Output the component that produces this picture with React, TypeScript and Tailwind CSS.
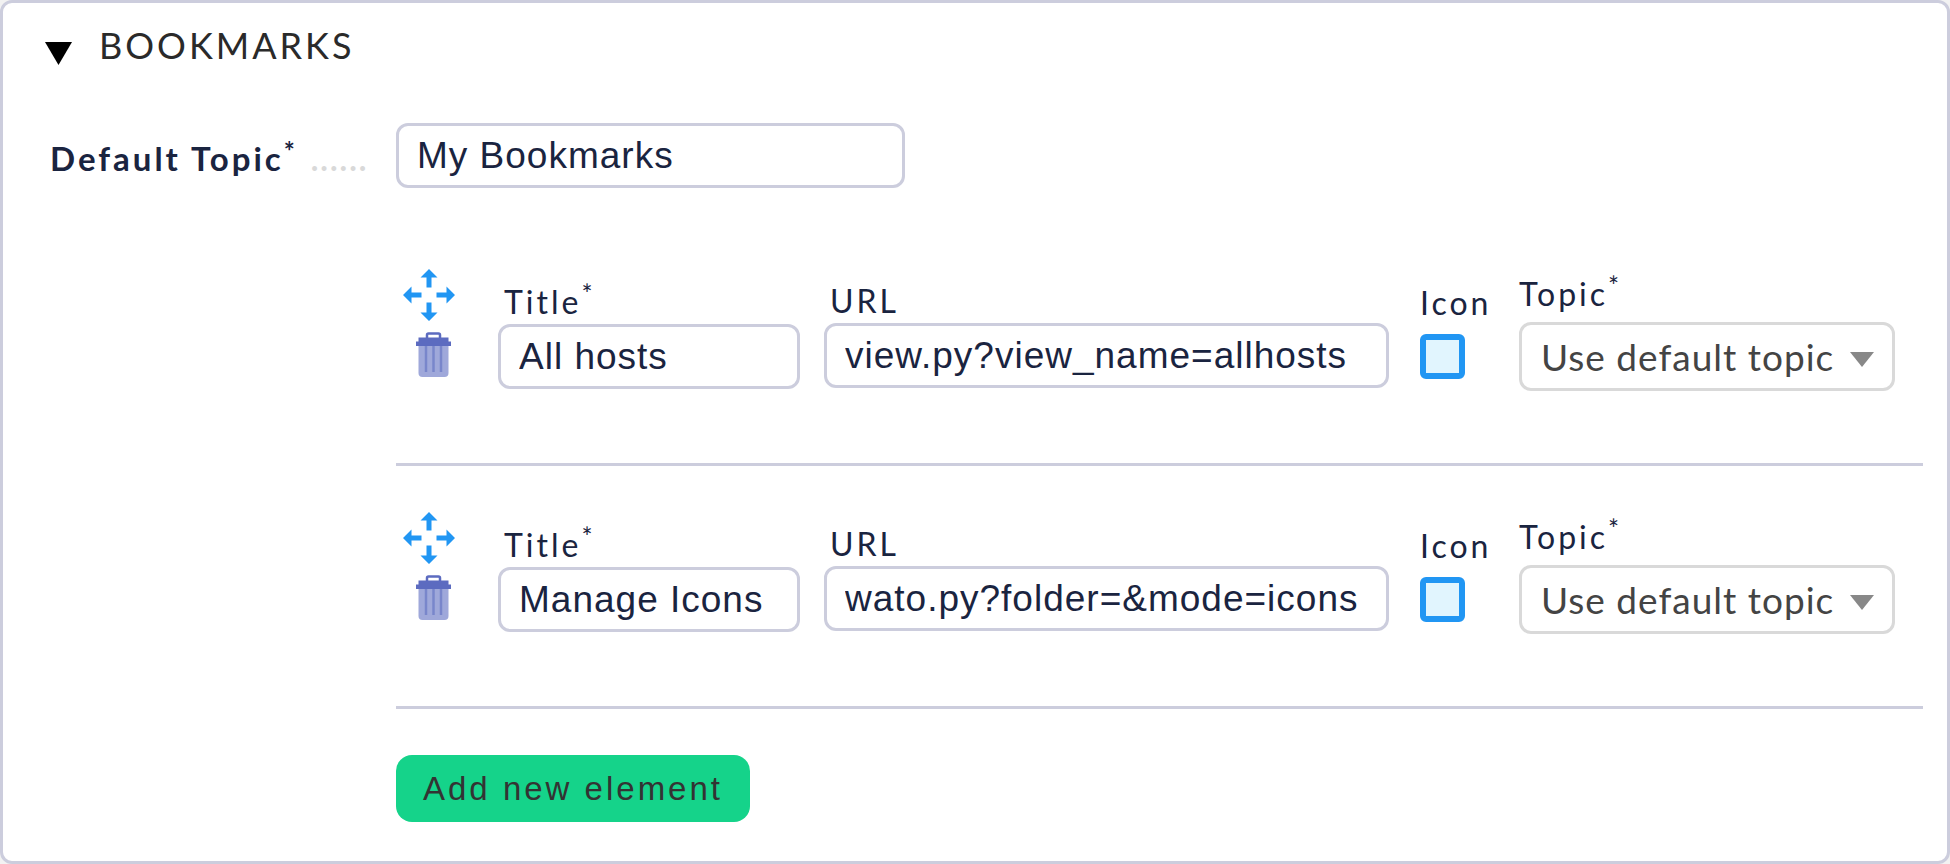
import { useId, useState } from "react";

type Bookmark = { title: string; url: string };

const initialBookmarks: Bookmark[] = [
  { title: "All hosts", url: "view.py?view_name=allhosts" },
  { title: "Manage Icons", url: "wato.py?folder=&mode=icons" },
];

const inputClass =
  "h-[65px] rounded-xl border-3 border-[#cccddd] bg-white px-[18px] font-['Liberation_Sans',sans-serif] text-[37px] tracking-[1px] text-[#1a2440]";

const labelClass = "block text-[32px] leading-10 tracking-[3px]";

function Required() {
  return <sup className="top-[-10px] text-[26px] leading-none tracking-normal">*</sup>;
}

function MoveIcon() {
  return (
    <svg viewBox="0 0 52 52" className="size-[52px]" fill="#2196f3" aria-hidden="true">
      <path d="M26 0l8.500 8.500h-6v10h-5v-10h-6z" />
      <path d="M26 52l8.500-8.500h-6v-10h-5v10h-6z" />
      <path d="M0 26l8.500-8.500v6h10v5h-10v6z" />
      <path d="M52 26l-8.500-8.500v6h-10v5h10v6z" />
    </svg>
  );
}

function TrashIcon() {
  return (
    <svg viewBox="0 0 35 46" className="h-[46px] w-[35px]" aria-hidden="true">
      <path d="M2.500 13h30v28a4 4 0 0 1-4 4h-22a4 4 0 0 1-4-4z" fill="#9fa8da" />
      <path d="M10 14v26M17.500 14v26M25 14v26" stroke="#7986cb" strokeWidth="2.500" />
      <path d="M11 6V3a1.500 1.500 0 0 1 1.500-1.500h10A1.500 1.500 0 0 1 24 3v3" fill="none" stroke="#5c6bc0" strokeWidth="2.500" />
      <path d="M2.500 5.500h30V9.500H35V14H0V9.500h2.500z" fill="#5c6bc0" />
    </svg>
  );
}

function BookmarkRow({ bookmark }: { bookmark: Bookmark }) {
  const id = useId();
  return (
    <li className="flex items-end border-b-3 border-[#cccddd] pt-[46px] pb-[72px]">
      <div className="flex w-[102px] shrink-0 flex-col items-start gap-[11px] pb-[13px] pl-[7px]">
        <button type="button" aria-label="Move this entry">
          <MoveIcon />
        </button>
        <button type="button" aria-label="Delete this entry" className="ml-[13px]">
          <TrashIcon />
        </button>
      </div>
      <div className="mr-6 shrink-0 pb-0.5">
        <label htmlFor={`${id}-title`} className={`${labelClass} mb-0.5 pl-1.5`}>
          Title
          <Required />
        </label>
        <input id={`${id}-title`} defaultValue={bookmark.title} className={`${inputClass} block w-[302px]`} />
      </div>
      <div className="mr-[31px] min-w-0 flex-1 pb-[3px]">
        <label htmlFor={`${id}-url`} className={`${labelClass} mb-0.5 pl-1.5`}>
          URL
        </label>
        <input id={`${id}-url`} defaultValue={bookmark.url} className={`${inputClass} block w-full`} />
      </div>
      <div className="w-[99px] shrink-0 pb-3">
        <div className={`${labelClass} mb-[11px]`}>Icon</div>
        <button
          type="button"
          aria-label="Choose icon"
          className="block size-[45px] rounded-md border-6 border-[#2196f3] bg-[#e1f5fe]"
        />
      </div>
      <div className="mr-7 shrink-0">
        <label htmlFor={`${id}-topic`} className={`${labelClass} mb-2`}>
          Topic
          <Required />
        </label>
        <div className="relative">
          <select
            id={`${id}-topic`}
            className="block h-[69px] w-[376px] appearance-none rounded-xl border-3 border-[#d9d9d9] bg-white pl-[19px] text-[37px] tracking-[1px] text-[#444444]"
          >
            <option>Use default topic</option>
          </select>
          <svg
            viewBox="0 0 24 15"
            className="pointer-events-none absolute top-[30px] right-[21px] h-[15px] w-6"
            fill="#888888"
            aria-hidden="true"
          >
            <path d="M0 0h24L12 15z" />
          </svg>
        </div>
      </div>
    </li>
  );
}

export default function App() {
  const [bookmarks, setBookmarks] = useState(initialBookmarks);
  const [open, setOpen] = useState(true);
  return (
    <div className="bg-[#f2f2f2] font-[Lato,sans-serif] text-[#1a2440]">
      <section className="rounded-xl border-3 border-[#cccddd] bg-white pt-5 pr-6 pb-[39px] pl-[42px]">
        <h2>
          <button
            type="button"
            aria-expanded={open}
            onClick={() => setOpen(!open)}
            className="flex items-center gap-[27px] text-4xl leading-11 tracking-[3px] text-[#2a2a2a]"
          >
            <svg viewBox="0 0 27 23" className="mt-4 h-[23px] w-[27px]" aria-hidden="true">
              <path d="M0 0h27L13.500 23z" />
            </svg>
            BOOKMARKS
          </button>
        </h2>
        {open && (
          <div className="pt-14">
            <div className="flex items-center">
              <label
                htmlFor="default-topic"
                className="flex w-[351px] shrink-0 items-baseline pt-1.5 pl-[5px] text-[33px] leading-10 font-bold tracking-[3px]"
              >
                <span>
                  Default Topic
                  <Required />
                </span>
                <span aria-hidden="true" className="ml-4 text-[32px] tracking-[2px] text-[#d9d9d9]">
                  ......
                </span>
              </label>
              <input id="default-topic" defaultValue="My Bookmarks" className={`${inputClass} w-[509px]`} />
            </div>
            <div className="pt-[35px] pl-[351px]">
              <ul>
                {bookmarks.map((bookmark, index) => (
                  <BookmarkRow key={index} bookmark={bookmark} />
                ))}
              </ul>
              <button
                type="button"
                onClick={() => setBookmarks([...bookmarks, { title: "", url: "" }])}
                className="mt-[46px] block h-[67px] rounded-2xl bg-[#15d38a] px-[27px] font-['Liberation_Sans',sans-serif] text-[33px] tracking-[3px] text-[#333333]"
              >
                Add new element
              </button>
            </div>
          </div>
        )}
      </section>
    </div>
  );
}
